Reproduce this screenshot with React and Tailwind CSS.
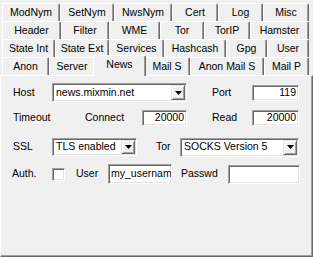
const rows = [
  [["ModNym", 58], ["SetNym", 54], ["NwsNym", 58], ["Cert", 46], ["Log", 45], ["Misc", 46]],
  [["Header", 59], ["Filter", 48], ["WME", 51], ["Tor", 44], ["TorIP", 46], ["Hamster", 59]],
  [["State Int", 53], ["State Ext", 54], ["Services", 55], ["Hashcash", 62], ["Gpg", 41], ["User", 42]],
  [["Anon", 47], ["Server", 46], ["News", 49], ["Mail S", 46], ["Anon Mail S", 74], ["Mail P", 45]],
];

function Tab({ label, width, selected }) {
  if (selected) {
    return (
      <div
        className="relative z-10 -mx-[2px] -mt-[2px] flex h-[21px] shrink-0 items-center justify-center rounded-t-[2px] border-l border-t border-r border-l-white border-t-white border-r-[#696969] bg-[#f0f0f0] pb-[3px] shadow-[inset_-1px_0_0_#a0a0a0]"
        style={{ width: width + 4 }}
      >
        {label}
      </div>
    );
  }
  return (
    <div
      className="flex h-[18px] shrink-0 items-center justify-center rounded-t-[2px] border-l border-t border-r border-l-white border-t-white border-r-[#696969] bg-[#f0f0f0] shadow-[inset_-1px_0_0_#a0a0a0]"
      style={{ width }}
    >
      {label}
    </div>
  );
}

const sunken =
  "border border-t-[#a0a0a0] border-l-[#a0a0a0] border-r-white border-b-white bg-white shadow-[inset_1px_1px_0_#696969,inset_-1px_-1px_0_#e3e3e3]";

function Edit({ className = "", value = "", right = false }) {
  return (
    <div
      className={`${sunken} flex items-center overflow-hidden whitespace-nowrap px-[2px] ${right ? "justify-end" : ""} ${className}`}
    >
      {value}
    </div>
  );
}

function Combo({ className = "", value }) {
  return (
    <div className={`${sunken} flex items-center overflow-hidden ${className}`}>
      <span className="flex-1 whitespace-nowrap pl-[3px]">{value}</span>
      <div className="mr-[1px] flex h-[calc(100%-2px)] w-[14px] items-center justify-center border border-t-[#e3e3e3] border-l-[#e3e3e3] border-r-[#696969] border-b-[#696969] bg-[#f0f0f0] shadow-[inset_1px_1px_0_#fff,inset_-1px_-1px_0_#a0a0a0]">
        <svg width="7" height="4" viewBox="0 0 7 4">
          <path d="M0 0h7L3.5 4z" fill="#000" />
        </svg>
      </div>
    </div>
  );
}

export default function App() {
  return (
    <div className="flex h-[257px] w-[313px] flex-col bg-[#f0f0f0] font-['Liberation_Sans',Arial,sans-serif] text-[10.5px] text-black">
      {/* Tab rows */}
      <div className="flex flex-col px-[2px] pt-[3px]">
        {rows.map((row, i) => (
          <div key={i} className="flex h-[18px] items-start">
            {row.map(([label, w]) => (
              <Tab key={label} label={label} width={w} selected={label === "News"} />
            ))}
          </div>
        ))}
      </div>

      {/* Page */}
      <div className="flex flex-1 flex-col border border-t-white border-l-white border-r-[#696969] border-b-[#696969] pt-[7px] shadow-[inset_-1px_-1px_0_#a0a0a0]">
        <div className="flex h-[19px] items-center pl-[12px]">
          <span className="w-[39px]">Host</span>
          <Combo className="h-[19px] w-[135px]" value="news.mixmin.net" />
          <span className="ml-[25px] w-[40px]">Port</span>
          <Edit className="h-[16px] w-[47px]" value="119" right />
        </div>

        <div className="mt-[7px] flex h-[17px] items-center pl-[12px]">
          <span className="w-[72px]">Timeout</span>
          <span className="w-[57px]">Connect</span>
          <Edit className="h-[16px] w-[45px]" value="20000" right />
          <span className="ml-[25px] w-[40px]">Read</span>
          <Edit className="h-[16px] w-[47px]" value="20000" right />
        </div>

        <div className="mt-[12px] flex h-[18px] items-center pl-[12px]">
          <span className="w-[39px]">SSL</span>
          <Combo className="h-[18px] w-[85px]" value="TLS enabled" />
          <span className="ml-[19px] w-[24px]">Tor</span>
          <Combo className="h-[19px] w-[119px]" value="SOCKS Version 5" />
        </div>

        <div className="mt-[8px] flex h-[20px] items-center pl-[11px]">
          <span className="w-[40px]">Auth.</span>
          <div className={`${sunken} h-[13px] w-[13px]`} />
          <span className="ml-[11px] w-[32px]">User</span>
          <Edit className="h-[20px] w-[64px]" value="my_usernam" />
          <span className="ml-[9px] w-[47px]">Passwd</span>
          <Edit className="h-[19px] w-[72px]" />
        </div>
      </div>
    </div>
  );
}
